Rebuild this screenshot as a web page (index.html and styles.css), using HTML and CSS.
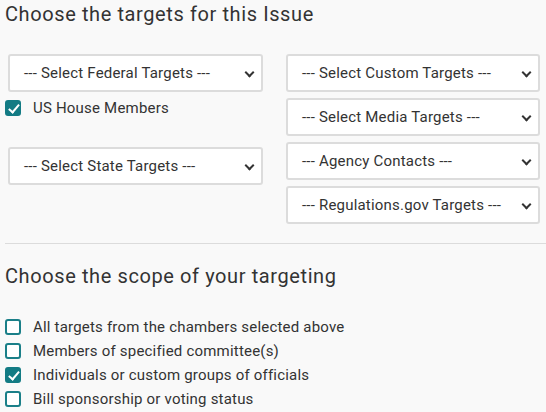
FILE: index.html
```html
<!DOCTYPE html>
<html>
<head>
<meta charset="utf-8">
<link rel="stylesheet" href="styles.css">
</head>
<body>
<div class="page">
  <h2 class="heading">Choose the targets for this Issue</h2>
  <div class="targets">
    <div class="col">
      <div class="select">--- Select Federal Targets ---<span class="chev"></span></div>
      <label class="check-row house"><span class="box checked"></span>US House Members</label>
      <div class="select state">--- Select State Targets ---<span class="chev"></span></div>
    </div>
    <div class="col right">
      <div class="select">--- Select Custom Targets ---<span class="chev"></span></div>
      <div class="select">--- Select Media Targets ---<span class="chev"></span></div>
      <div class="select">--- Agency Contacts ---<span class="chev"></span></div>
      <div class="select">--- Regulations.gov Targets ---<span class="chev"></span></div>
    </div>
  </div>
  <hr class="divider">
  <h2 class="heading scope">Choose the scope of your targeting</h2>
  <div class="options">
    <label class="check-row"><span class="box"></span>All targets from the chambers selected above</label>
    <label class="check-row"><span class="box"></span>Members of specified committee(s)</label>
    <label class="check-row"><span class="box checked"></span>Individuals or custom groups of officials</label>
    <label class="check-row"><span class="box"></span>Bill sponsorship or voting status</label>
  </div>
</div>
</body>
</html>
```

FILE: styles.css
```css
html, body {
  margin: 0;
  padding: 0;
  background: #f9f9f9;
}
body {
  font-family: Roboto, "Liberation Sans", sans-serif;
  color: #333;
}
.page {
  padding: 0 6px 0 5px;
}
.heading {
  margin: 0;
  padding-top: 2px;
  font-size: 20px;
  font-weight: 400;
  letter-spacing: 0.6px;
  line-height: 24px;
  color: #333;
}
.targets {
  display: grid;
  grid-template-columns: 255px 254px;
  column-gap: 23px;
  margin-top: 28px;
  padding-left: 3px;
}
.col {
  display: flex;
  flex-direction: column;
}
.right {
  gap: 6px;
}
.select {
  position: relative;
  height: 38px;
  box-sizing: border-box;
  border: 2px solid #dcdcdc;
  border-radius: 3px;
  background: #fff;
  padding-left: 14px;
  font-size: 15px;
  letter-spacing: 0.2px;
  line-height: 34px;
  color: #333;
}
.chev {
  position: absolute;
  right: 8px;
  top: 13px;
  width: 5px;
  height: 5px;
  border-right: 2px solid #333;
  border-bottom: 2px solid #333;
  transform: rotate(45deg);
}
.check-row {
  display: flex;
  align-items: center;
  height: 24px;
  font-size: 15px;
  letter-spacing: 0.2px;
  color: #333;
}
.house {
  margin: 4px 0 0 -3px;
}
.state {
  margin-top: 27px;
}
.box {
  width: 16px;
  height: 16px;
  box-sizing: border-box;
  border: 2px solid #1a7f88;
  border-radius: 3px;
  background: #fff;
  margin-right: 12px;
  flex: none;
  position: relative;
}
.box.checked {
  background: #137b84;
  border-color: #137b84;
}
.box.checked::after {
  content: "";
  position: absolute;
  left: 4px;
  top: 0px;
  width: 4px;
  height: 9px;
  border-right: 2px solid #fff;
  border-bottom: 2px solid #fff;
  transform: rotate(40deg);
}
.divider {
  border: 0;
  border-top: 1px solid #dcdcdc;
  margin: 19px -6px 0 0;
}
.scope {
  margin-top: 18px;
}
.options {
  margin-top: 27px;
}
```
